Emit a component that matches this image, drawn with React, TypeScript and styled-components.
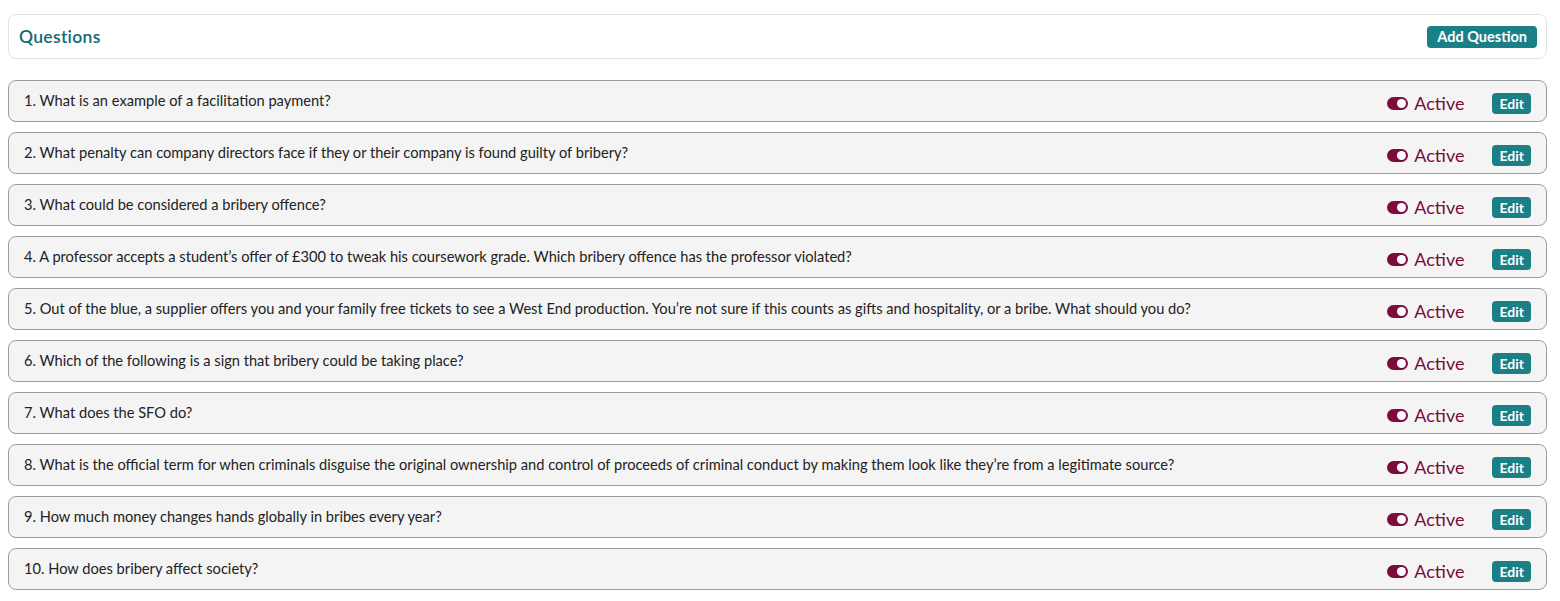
import styled, { createGlobalStyle } from "styled-components";

const GlobalStyle = createGlobalStyle`
    body {
        margin: 0;
        background: #fff;
        font-family: 'Lato', 'Noto Sans', sans-serif;
    }
`

const Page = styled.div`
    padding: 14px 13px 0 8px;
    display: flex;
    flex-direction: column;
    gap: 21px;
`

const HeaderCard = styled.div`
    height: 45px;
    box-sizing: border-box;
    border: 1px solid #e3e3e3;
    border-radius: 8px;
    display: flex;
    align-items: center;
    justify-content: space-between;
    padding: 0 9px 0 10px;
`

const Title = styled.h2`
    margin: -1px 0 0;
    font-size: 17.5px;
    letter-spacing: 0.3px;
    font-weight: 600;
    color: #136a78;
`

const TealButton = styled.button<{ $size?: "small" | "large" }>`
    border: none;
    background: #1b8086;
    color: #fff;
    font-family: inherit;
    font-weight: 700;
    font-size: ${p => (p.$size === "large" ? "14.5px" : "14px")};
    border-radius: 4px;
    height: ${p => (p.$size === "large" ? "22px" : "21px")};
    padding: ${p => (p.$size === "large" ? "0 10px" : "0 7px")};
    cursor: pointer;
`

const List = styled.div`
    display: flex;
    flex-direction: column;
    gap: 10px;
`

const Row = styled.div`
    height: 42px;
    box-sizing: border-box;
    border: 1px solid #9c9c9c;
    border-radius: 8px;
    background: #f4f4f4;
    display: flex;
    align-items: center;
    padding: 0 15px 0 15px;
`

const QuestionText = styled.span`
    flex: 1;
    font-size: 14.65px;
    color: #222;
    margin-top: -2px;
`

const Status = styled.div`
    display: flex;
    align-items: center;
    gap: 6px;
    margin-right: 28px;
    margin-top: 4px;
    color: #7b0a3d;
    font-size: 18px;
`

const Toggle = styled.span`
    width: 21px;
    height: 13px;
    border-radius: 7px;
    background: #7b0a3d;
    position: relative;
    display: inline-block;

    &::after {
        content: '';
        position: absolute;
        right: 2px;
        top: 2px;
        width: 9px;
        height: 9px;
        border-radius: 50%;
        background: #fff;
    }
`

const EditWrap = styled.div`
    margin-top: 4px;
`

const questions = [
    "What is an example of a facilitation payment?",
    "What penalty can company directors face if they or their company is found guilty of bribery?",
    "What could be considered a bribery offence?",
    "A professor accepts a student\u2019s offer of \u00a3300 to tweak his coursework grade. Which bribery offence has the professor violated?",
    "Out of the blue, a supplier offers you and your family free tickets to see a West End production. You\u2019re not sure if this counts as gifts and hospitality, or a bribe. What should you do?",
    "Which of the following is a sign that bribery could be taking place?",
    "What does the SFO do?",
    "What is the official term for when criminals disguise the original ownership and control of proceeds of criminal conduct by making them look like they\u2019re from a legitimate source?",
    "How much money changes hands globally in bribes every year?",
    "How does bribery affect society?",
]

export default function App() {
    return (
        <>
            <GlobalStyle />
            <Page>
                <HeaderCard>
                    <Title>Questions</Title>
                    <TealButton $size="large">Add Question</TealButton>
                </HeaderCard>
                <List>
                    {questions.map((q, i) => (
                        <Row key={i}>
                            <QuestionText>{i + 1}. {q}</QuestionText>
                            <Status>
                                <Toggle />
                                Active
                            </Status>
                            <EditWrap>
                                <TealButton>Edit</TealButton>
                            </EditWrap>
                        </Row>
                    ))}
                </List>
            </Page>
        </>
    )
}
